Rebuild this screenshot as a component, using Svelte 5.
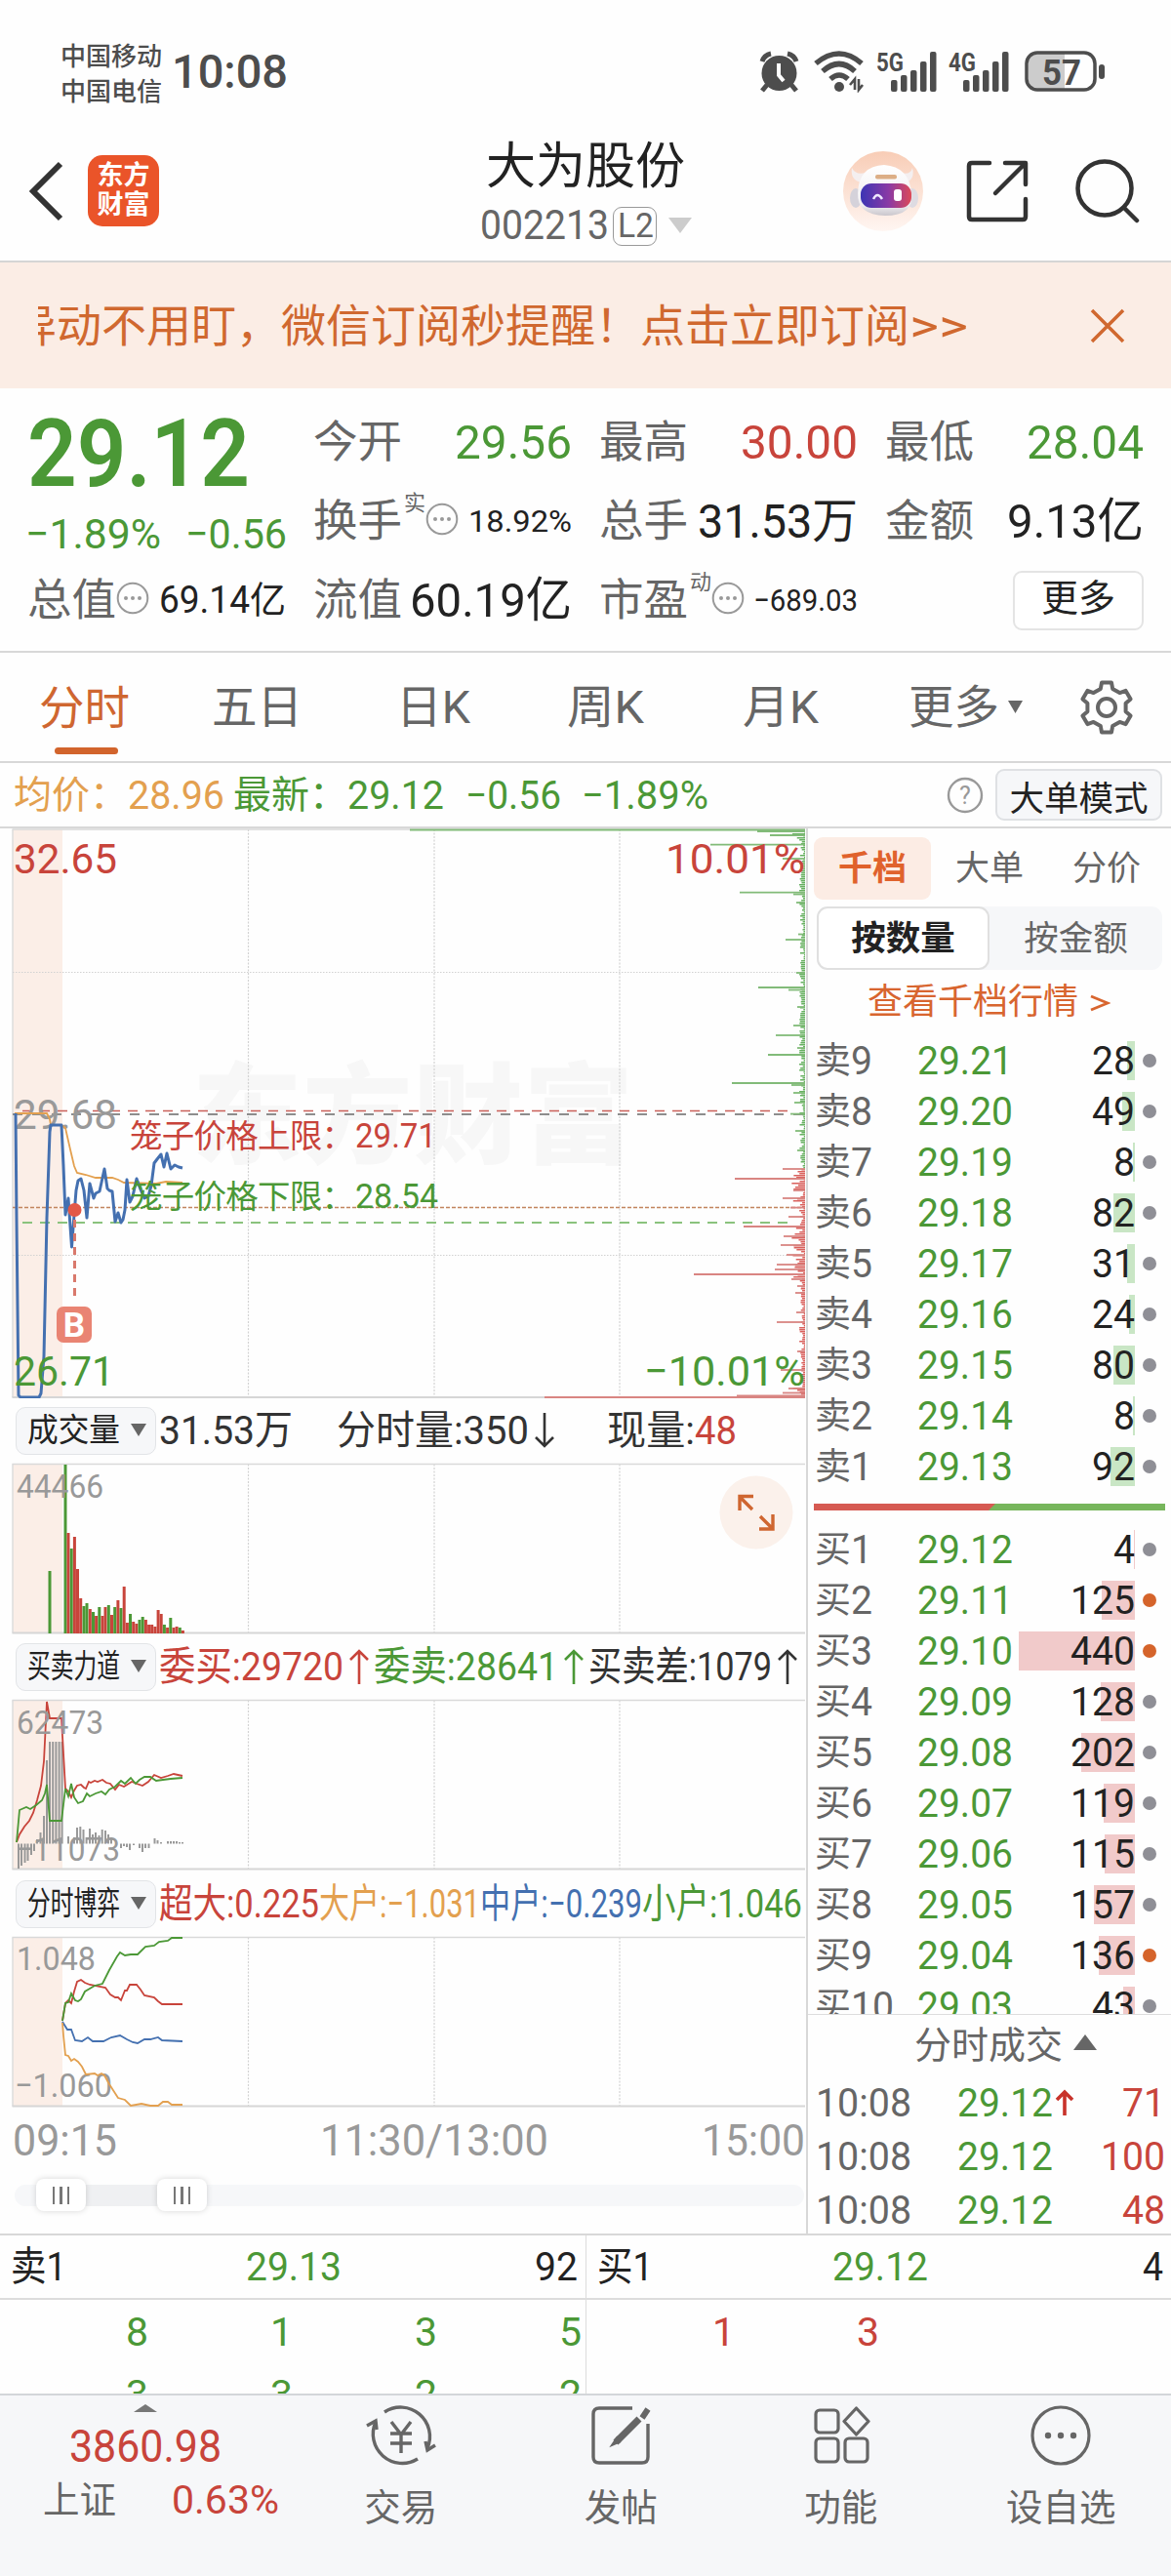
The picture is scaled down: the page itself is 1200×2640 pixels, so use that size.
<script>
  // Scales a run of text horizontally so that it occupies exactly `width` pixels.
  function fit(node, width) {
    if (!width) return;
    const natural = node.getBoundingClientRect().width;
    node.style.transform = `scaleX(${width / natural})`;
    node.style.marginRight = `${width - natural}px`;
  }

  const asks = [
    [9, '29.21', 28], [8, '29.20', 49], [7, '29.19', 8], [6, '29.18', 82], [5, '29.17', 31],
    [4, '29.16', 24], [3, '29.15', 80], [2, '29.14', 8], [1, '29.13', 92]
  ];
  const bids = [
    [1, '29.12', 4], [2, '29.11', 125, true], [3, '29.10', 440, true], [4, '29.09', 128], [5, '29.08', 202],
    [6, '29.07', 119], [7, '29.06', 115], [8, '29.05', 157], [9, '29.04', 136, true], [10, '29.03', 43]
  ];
  const trades = [['71', true], ['100', false], ['48', false]];

  const digitWidth = (s) => String(s).length * 22;

  // Depth spikes on the right edge of the price chart: [y, left x]
  const greenSpikes = [
    [850.5, 420], [852, 776], [856, 789], [865.6, 728], [880, 802], [914.6, 758], [916.5, 813], [925, 816],
    [957.5, 818], [963, 805], [997, 816], [1012, 777], [1014.5, 808], [1032, 817], [1051, 813], [1061, 795],
    [1074, 817], [1081, 787], [1110, 750], [1112, 811], [1120, 813], [1130, 814], [1141.6, 810], [1159, 815], [1179, 817]
  ];
  const redSpikes = [
    [1198, 802], [1208, 753], [1220, 813], [1228, 802], [1237.6, 810], [1247, 808], [1257, 762], [1267, 803],
    [1276, 800], [1286, 806], [1296, 796], [1301, 794], [1306, 711], [1311, 811], [1318, 817], [1325, 815],
    [1345, 816], [1355, 796], [1385, 817], [1404, 800], [1423, 808], [1427.5, 802], [1430.5, 755], [1432, 558]
  ];
  const noise = [];
  for (let y = 852, i = 0; y < 1432; y += 2, i++) {
    const r = (Math.sin(i * 12.9898) * 43758.5453) % 1;
    const dense = (y > 1196 && y < 1232) || (y > 1255 && y < 1310) || y > 1420 || y < 862;
    noise.push({ y, w: 1 + Math.abs(r) * (dense ? 13 : 5), red: y > 1196 });
  }

  const volume = [
    [51, 1610, 1], [67, 1501, 1], [70, 1571, 0], [73.2, 1587, 1], [76.4, 1575, 0], [79.5, 1608, 0], [82.7, 1638, 0],
    [86, 1646, 1], [89, 1643, 1], [92.3, 1649, 0], [95.5, 1652, 1], [98.6, 1656, 0], [101.8, 1647, 1], [105, 1656, 0],
    [108, 1647, 0], [111.3, 1645, 1], [114.5, 1655, 0], [117.7, 1647, 1], [120.9, 1640, 0], [124, 1648, 1],
    [127.2, 1626, 0], [130.4, 1663, 0], [133.5, 1654, 1], [136.7, 1662, 0], [139.9, 1664, 0], [143, 1660, 1],
    [146.2, 1657, 1], [149.4, 1660, 0], [152.6, 1665, 0], [155.7, 1665, 0], [158.9, 1667, 0], [162.1, 1650, 0],
    [165.2, 1654, 0], [168.4, 1665, 1], [171.6, 1668, 0], [174.8, 1658, 1], [178, 1668, 0], [181.1, 1667, 0],
    [184.3, 1668, 1], [187.4, 1671, 0]
  ];

  // Net force bars around a baseline: [x, y]
  const BASE = 1889.5;
  const force = [
    [19, 1915], [22, 1912], [25.5, 1909], [28.5, 1907], [32, 1901], [35, 1897], [38, 1885], [41.5, 1878], [45, 1861],
    [48, 1804], [51, 1785], [54.2, 1785], [57.4, 1785], [60.6, 1785], [63.6, 1785], [70, 1882], [76, 1883], [79, 1873],
    [82.3, 1872], [85.5, 1875], [88.6, 1883], [92, 1874], [95, 1880], [98, 1878], [101.5, 1881], [104.7, 1875],
    [108, 1876], [111, 1880], [114, 1883], [124, 1894], [127, 1892], [130, 1893], [133, 1896], [137, 1891], [143, 1894],
    [146, 1898], [149, 1894], [152.5, 1894], [158.5, 1884], [161.5, 1886], [165, 1888], [172, 1887], [175, 1887],
    [178, 1887], [181, 1887], [184, 1888], [187, 1888]
  ];

  const gear = (() => {
    const pts = [];
    for (let i = 0; i < 6; i++) {
      for (const [off, r] of [[-18, 20], [-11, 26], [11, 26], [18, 20]]) {
        const a = ((i * 60 - 90 + off) * Math.PI) / 180;
        pts.push(`${(30 + r * Math.cos(a)).toFixed(1)},${(30 + r * Math.sin(a)).toFixed(1)}`);
      }
    }
    return pts.join(' ');
  })();

  const sellQueue = ['8', '1', '3', '5', '3', '3', '2', '2'];
  const buyQueue = ['1', '3'];
</script>

{#snippet t(text, w, cls)}<span class="t {cls ?? ''}" use:fit={w}>{text}</span>{/snippet}

{#snippet dots()}
  <svg class="dots" width="34" height="34" viewBox="0 0 34 34">
    <circle cx="17" cy="17" r="15.3" fill="none" stroke="#999" stroke-width="2" />
    <circle cx="10" cy="17" r="2" fill="#999" /><circle cx="17" cy="17" r="2" fill="#999" /><circle cx="24" cy="17" r="2" fill="#999" />
  </svg>
{/snippet}

{#snippet signal(label)}
  <svg width="63" height="44" viewBox="0 0 63 44" fill="#4d4d4d">
    <text x="0" y="22" font-size="26" font-weight="700" textLength="28" lengthAdjust="spacingAndGlyphs">{label}</text>
    <rect x="15" y="31" width="6.5" height="12" rx="2" /><rect x="25" y="26" width="6.5" height="17" rx="2" />
    <rect x="35" y="21" width="6.5" height="22" rx="2" /><rect x="45" y="12" width="6.5" height="31" rx="2" />
    <rect x="55" y="2" width="6.5" height="41" rx="2" />
  </svg>
{/snippet}

{#snippet frame(top, bottom)}
  <rect x="13" y={top} width="51" height={bottom - top} fill="#fbeee7" />
  <g stroke="#d2d2d2" stroke-width="1.2" stroke-dasharray="2 1.5">
    <path d="M254.5 {top}V{bottom}M445 {top}V{bottom}M635 {top}V{bottom}" />
  </g>
  <path d="M13 {top}V{bottom}" stroke="#ddd" stroke-width="1.5" />
  <path d="M12.5 {top}H825" stroke="#d9d9d9" stroke-width="1.5" />
  <path d="M12.5 {bottom}H825" stroke="#d6d6d6" stroke-width="2" />
{/snippet}

{#snippet picker(label)}
  <div class="picker">
    {@render t(label, 95, 'picker-label')}
    <svg width="17" height="14" viewBox="0 0 17 14"><path d="M0 0H16L8 13Z" fill="#666" /></svg>
  </div>
{/snippet}

{#snippet level(side, n, price, qty, hot)}
  <div class="level">
    <span class="lv-name">{@render t(side, 37)}{@render t(n, digitWidth(n))}</span>
    {@render t(price, 98, 'green lv-price')}
    <span class="lv-qty">
      <i class={side === '卖' ? 'bar ask' : 'bar bid'} style="width: {Math.max(1.3, qty * 0.27)}px"></i>
      {@render t(qty, digitWidth(qty), 'lv-num')}
    </span>
    <i class="dot" class:hot></i>
  </div>
{/snippet}

<main>
  <header class="status">
    <div class="carriers"><span>中国移动</span><span>中国电信</span></div>
    {@render t('10:08', 119, 'clock')}
    <div class="status-icons">
      <svg width="42" height="44" viewBox="0 0 42 44">
        <circle cx="20.5" cy="24" r="18" fill="#4d4d4d" />
        <path d="M3 12A12 12 0 0 1 12 4M38 12A12 12 0 0 0 29 4" stroke="#4d4d4d" stroke-width="5" fill="none" />
        <path d="M8 36L3 42M33 36L38 42" stroke="#4d4d4d" stroke-width="5" />
        <path d="M20 14V26L25 32" stroke="#fff" stroke-width="4" fill="none" />
      </svg>
      <svg class="wifi" width="54" height="44" viewBox="0 0 54 44">
        <g fill="none" stroke="#4d4d4d" stroke-width="5.5">
          <path d="M2 14Q26 -6 49 14" /><path d="M9 22Q26 7 42 22" /><path d="M17 30Q26 22 35 30" />
        </g>
        <circle cx="26" cy="38" r="5" fill="#4d4d4d" />
        <path d="M37 36L42 30V41M50 36L46 41V30" fill="none" stroke="#4d4d4d" stroke-width="2.6" />
      </svg>
      <span class="sig-a">{@render signal('5G')}</span>
      <span class="sig-b">{@render signal('4G')}</span>
      <svg class="battery" width="84" height="44" viewBox="0 0 84 44">
        <path d="M12 4H41V41H12Q4 41 4 33V12Q4 4 12 4Z" fill="#ccc" />
        <rect x="2" y="3" width="70" height="38" rx="11" fill="none" stroke="#4d4d4d" stroke-width="3.5" />
        <rect x="76" y="15" width="6" height="15" rx="3" fill="#4d4d4d" />
        <text x="18" y="35.5" font-size="37" font-weight="700" textLength="40" lengthAdjust="spacingAndGlyphs" fill="#4d4d4d">57</text>
      </svg>
    </div>
  </header>

  <nav class="titlebar">
    <div class="tb-left">
      <svg width="36" height="62" viewBox="0 0 36 62"><path d="M32 3L4 31L32 59" fill="none" stroke="#333" stroke-width="6" /></svg>
      <div class="logo"><span>东方</span><span>财富</span></div>
    </div>
    <div class="tb-title">
      <h1>大为股份</h1>
      <div class="code">
        {@render t('002213', 132)}
        <span class="l2">{@render t('L2', 37)}</span>
        <svg width="24" height="16" viewBox="0 0 24 16"><path d="M0 0H24L12 16Z" fill="#ccc" /></svg>
      </div>
    </div>
    <div class="tb-right">
      <svg width="82" height="82" viewBox="0 0 82 82">
        <defs>
          <linearGradient id="halo" x1="0" y1="0" x2="0" y2="1"><stop offset="0" stop-color="#f8cdb6" /><stop offset="1" stop-color="#fff6f2" /></linearGradient>
          <linearGradient id="visor"><stop offset="0" stop-color="#3c35b4" /><stop offset=".55" stop-color="#8a3aa5" /><stop offset="1" stop-color="#dc4a58" /></linearGradient>
          <linearGradient id="shell" x1="0" y1="0" x2="0" y2="1"><stop offset="0" stop-color="#fff" /><stop offset=".8" stop-color="#efedf0" /><stop offset="1" stop-color="#c9c6cc" /></linearGradient>
        </defs>
        <circle cx="41" cy="41" r="41" fill="url(#halo)" />
        <path d="M9 17Q7 29 18 32L23 22Q13 25 9 17ZM71 17Q74 29 64 32L59 22Q69 25 71 17Z" fill="#f4eff0" />
        <ellipse cx="13" cy="48" rx="6" ry="10" fill="#d5d2da" /><ellipse cx="71" cy="48" rx="6" ry="10" fill="#dedbe2" />
        <path d="M15 43Q16 15 42 14Q68 16 70 43Q73 66 43 66Q14 65 15 43Z" fill="url(#shell)" />
        <rect x="33" y="24" width="22" height="4.5" rx="2" fill="#dcae86" />
        <rect x="18" y="33" width="52" height="25" rx="11" fill="url(#visor)" />
        <path d="M31 49Q35 41 40 49" fill="none" stroke="#f0e8ff" stroke-width="2.5" />
        <rect x="52" y="39" width="8" height="12" rx="3" fill="#fff" />
      </svg>
      <svg width="64" height="64" viewBox="0 0 64 64" fill="none" stroke="#333" stroke-width="4.5" stroke-linecap="round" stroke-linejoin="round">
        <path d="M24 3H6Q3 3 3 6V58Q3 61 6 61H58Q61 61 61 58V40" /><path d="M40 3H61V25M60 4L30 34" />
      </svg>
      <svg width="66" height="66" viewBox="0 0 66 66" fill="none" stroke="#333" stroke-width="4.5" stroke-linecap="round">
        <circle cx="30" cy="30" r="27.5" /><path d="M51 51L63 63" />
      </svg>
    </div>
  </nav>

  <section class="banner">
    <div class="marquee"><span>异动不用盯，微信订阅秒提醒！点击立即订阅</span>{@render t('>>', 60)}</div>
    <svg width="36" height="36" viewBox="0 0 36 36"><path d="M2 2L34 34M34 2L2 34" stroke="#d0682f" stroke-width="3.5" /></svg>
  </section>

  <section class="quote">
    <div class="headline">
      <div class="price">{@render t('29.12', 228)}</div>
      <div class="change">{@render t('−1.89%', 139)}{@render t('−0.56', 104)}</div>
    </div>
    <div class="cell"><span class="k">今开</span>{@render t('29.56', 120, 'v green')}</div>
    <div class="cell"><span class="k">最高</span>{@render t('30.00', 120, 'v red')}</div>
    <div class="cell"><span class="k">最低</span>{@render t('28.04', 120, 'v green')}</div>
    <div class="cell"><span class="k">换手</span><sup>实</sup>{@render dots()}{@render t('18.92%', 106, 'v s')}</div>
    <div class="cell"><span class="k">总手</span>{@render t('31.53万', 164, 'v')}</div>
    <div class="cell"><span class="k">金额</span>{@render t('9.13亿', 140, 'v')}</div>
    <div class="cell"><span class="k">总值</span>{@render dots()}{@render t('69.14亿', 130, 'v m')}</div>
    <div class="cell"><span class="k">流值</span>{@render t('60.19亿', 166, 'v')}</div>
    <div class="cell"><span class="k">市盈</span><sup>动</sup>{@render dots()}{@render t('−689.03', 107, 'v s')}</div>
    <div class="cell"><button class="more">更多</button></div>
  </section>

  <nav class="tabs">
    <div class="tab active">分时</div>
    <div class="tab t5">五日</div>
    <div class="tab tk">{@render t('日K', 76)}</div>
    <div class="tab tz">{@render t('周K', 79)}</div>
    <div class="tab ty">{@render t('月K', 78)}</div>
    <div class="tab tm">更多<svg width="16" height="14" viewBox="0 0 16 14"><path d="M0 0H15L7.5 13Z" fill="#666" /></svg></div>
    <svg class="gear" width="60" height="60" viewBox="0 0 60 60" fill="none" stroke="#666" stroke-width="4" stroke-linejoin="round">
      <polygon points={gear} /><circle cx="30" cy="30" r="9" />
    </svg>
  </nav>

  <section class="info">
    {@render t('均价：', 117, 'gold c')}{@render t('28.96', 99, 'gold')}
    {@render t('最新：', 117, 'green c i1')}{@render t('29.12', 99, 'green')}{@render t('−0.56', 98, 'green i2')}{@render t('−1.89%', 130, 'green i3')}
    <svg class="help" width="38" height="38" viewBox="0 0 38 38">
      <circle cx="19" cy="19" r="17" fill="none" stroke="#999" stroke-width="2.4" />
      <text x="19" y="28" font-size="25" text-anchor="middle" fill="#999">?</text>
    </svg>
    <button class="mode">大单模式</button>
  </section>

  <div class="board">
    <section class="left">
      <svg width="826" height="584" viewBox="0 849 826 584">
        <text x="197" y="1184" font-size="112" font-weight="900" textLength="452" fill="#f7f7f7">东方财富</text>
        {@render frame(850, 1432)}
        <path d="M13 996.5H825M13 1286.5H825" stroke="#d2d2d2" stroke-width="1.2" stroke-dasharray="1.5 1.5" />
        <path d="M23 1138.5H808" stroke="#c9605a" stroke-width="1.4" stroke-dasharray="10 8" />
        <path d="M13 1142H825" stroke="#8d8d8d" stroke-width="2" stroke-dasharray="10 10" />
        <path d="M13 1237.5H825" stroke="#c2855e" stroke-width="1.6" stroke-dasharray="4 2" />
        <path d="M23 1253H808" stroke="#8ac27d" stroke-width="2" stroke-dasharray="10 8" />
        {#each noise as n}
          <rect x={825 - n.w} y={n.y} width={n.w} height="1.5" fill={n.red ? '#d9605c' : '#66b060'} />
        {/each}
        {#each greenSpikes as [y, x]}
          <path d="M{x} {y}H825" stroke="#82bb79" stroke-width="1.8" />
        {/each}
        {#each redSpikes as [y, x]}
          <path d="M{x} {y}H825" stroke="#d98582" stroke-width="1.8" />
        {/each}
        <g font-size="43">
          <text x="14" y="895" textLength="106" lengthAdjust="spacingAndGlyphs" fill="#c8443b">32.65</text>
          <text x="682" y="895" textLength="143" lengthAdjust="spacingAndGlyphs" fill="#c8443b">10.01%</text>
          <text x="14" y="1157" textLength="106" lengthAdjust="spacingAndGlyphs" fill="#999">29.68</text>
        </g>
        <polyline fill="none" stroke="#e3a04f" stroke-width="1.8" points="15,1141 48,1141 51,1147 52,1153 63,1153 67,1156 72,1178 76,1195 79,1202 88,1204 98,1207 115,1207 121,1209 127,1212 160,1213 170,1211 187,1212" />
        <polyline fill="none" stroke="#4470b0" stroke-width="3" stroke-linejoin="round" points="16,1141 17,1250 19,1430 21,1432 40,1432 42,1428 45,1390 48,1248 51,1160 52,1153 63,1153 65,1195 67,1245 70,1228 73.5,1278 76,1245 78,1220 80,1210 83,1208 86,1220 89,1248 92,1213 96,1228 98,1223 102,1221 107,1198 110,1218 112,1220 115,1221 118,1252 121,1243 124,1253 126,1250 128,1240 130,1209 133,1232 136,1226 140,1208 144,1219 148,1228 152,1226 155,1215 158,1192 161,1188 165,1183 168,1196 171,1182 175,1198 179,1194 183,1196 187,1197" />
        <path d="M76.5 1250V1332" stroke="#d9796c" stroke-width="3" stroke-dasharray="8 6" />
        <circle cx="76.5" cy="1240" r="7" fill="#e35847" />
        <rect x="58" y="1339" width="36" height="37" rx="7" fill="#e98473" />
        <text x="76" y="1370" font-size="35" font-weight="700" text-anchor="middle" fill="#fff">B</text>
        <g font-size="43" fill="#4b9836">
          <text x="14" y="1420" textLength="103" lengthAdjust="spacingAndGlyphs">26.71</text>
          <text x="660" y="1420" textLength="165" lengthAdjust="spacingAndGlyphs">−10.01%</text>
        </g>
        <g font-size="33.5">
          <text x="133" y="1176" textLength="230" fill="#c8443b">笼子价格上限：</text>
          <text x="364" y="1176" font-size="35" textLength="83" lengthAdjust="spacingAndGlyphs" fill="#c8443b">29.71</text>
          <text x="133" y="1238" textLength="230" fill="#4b9836">笼子价格下限：</text>
          <text x="364" y="1238" font-size="35" textLength="85" lengthAdjust="spacingAndGlyphs" fill="#4b9836">28.54</text>
        </g>
      </svg>

      <div class="ind">
        {@render picker('成交量')}
        {@render t('31.53万', 137)}
        {@render t('分时量:350', 197, 'g1')}<svg class="arr" width="24" height="38" viewBox="0 0 24 38"><path d="M12 1V34M3 26L12 35L21 26" fill="none" stroke="#333" stroke-width="2.6" /></svg>
        {@render t('现量:', 90, 'g2')}{@render t('48', 43, 'red')}
      </div>

      <svg width="826" height="176" viewBox="0 1499 826 176">
        {@render frame(1500.5, 1673.5)}
        {#each volume as [x, y, up]}
          <rect x={x - 1.5} {y} width="3" height={1674 - y} fill={up ? '#4b9836' : '#c8443b'} />
        {/each}
        <text x="17" y="1535" font-size="34" textLength="89" lengthAdjust="spacingAndGlyphs" fill="#999">44466</text>
        <circle cx="775" cy="1550" r="37.5" fill="#fbf1eb" />
        <path d="M772 1533.5H758V1548M758 1534L771 1547M778 1567H792V1552M792 1567L779 1554" fill="none" stroke="#cf6630" stroke-width="3.4" />
      </svg>

      <div class="ind">
        {@render picker('买卖力道')}
        {@render t('委买:29720', 189, 'red')}<svg class="arr" width="24" height="38" viewBox="0 0 24 38"><path d="M12 37V4M3 12L12 3L21 12" fill="none" stroke="#c8443b" stroke-width="2.6" /></svg>
        {@render t('委卖:28641', 189, 'green g3')}<svg class="arr" width="24" height="38" viewBox="0 0 24 38"><path d="M12 37V4M3 12L12 3L21 12" fill="none" stroke="#4b9836" stroke-width="2.6" /></svg>
        {@render t('买卖差:1079', 188, 'g3')}<svg class="arr" width="24" height="38" viewBox="0 0 24 38"><path d="M12 37V4M3 12L12 3L21 12" fill="none" stroke="#333" stroke-width="2.6" /></svg>
      </div>

      <svg width="826" height="177" viewBox="0 1741 826 177">
        {@render frame(1742.5, 1915.5)}
        {#each force as [x, y]}
          <rect x={x - 1} y={Math.min(y, BASE)} width="2" height={Math.abs(BASE - y)} fill="#999" />
        {/each}
        <polyline fill="none" stroke="#c8443b" stroke-width="1.8" points="17,1888 20,1880 25,1872 30,1866 34,1858 38,1845 42,1830 45,1805 48,1744 51,1761 63,1761 67,1833 70,1836 73,1842 76,1835 79,1830 83,1829 86,1832 88,1833 91,1826 93,1827 97,1825 100,1826 105,1824 109,1827 113,1828 118,1834 122,1829 127,1831 135,1826 140,1828 146,1830 152,1826 158,1819 165,1822 172,1820 178,1818 187,1820" />
        <polyline fill="none" stroke="#4b9836" stroke-width="1.8" points="17,1888 20,1855 27,1852 31,1854 37,1850 43,1845 46,1838 48,1829 51,1866 63,1866 67,1833 70,1841 73,1828 76,1842 80,1848 85,1846 89,1838 92,1841 98,1838 104,1836 108,1839 112,1834 118,1831 124,1825 128,1828 134,1822 139,1828 143,1824 148,1821 154,1821 160,1825 167,1824 175,1823 187,1822" />
        <text x="17" y="1777" font-size="34" textLength="89" lengthAdjust="spacingAndGlyphs" fill="#999">62473</text>
        <text x="16" y="1907" font-size="34" textLength="107" lengthAdjust="spacingAndGlyphs" fill="#999">−11073</text>
      </svg>

      <div class="ind">
        {@render picker('分时博弈')}
        {@render t('超大:0.225', 164, 'red')}{@render t('大户:−1.031', 165, 'gold')}{@render t('中户:−0.239', 166, 'blue')}{@render t('小户:1.046', 164, 'green')}
      </div>

      <svg width="826" height="177" viewBox="0 1983 826 177">
        {@render frame(1984.5, 2157.5)}
        <text x="17" y="2018" font-size="34" textLength="81" lengthAdjust="spacingAndGlyphs" fill="#999">1.048</text>
        <text x="15" y="2148" font-size="34" textLength="100" lengthAdjust="spacingAndGlyphs" fill="#999">−1.060</text>
        <g fill="none" stroke-width="1.8">
          <polyline stroke="#c8443b" points="64,2070 67,2052 70,2049 73,2052 76,2040 79,2030 83,2028 87,2031 92,2033 108,2036 113,2043 118,2046 121,2046 124,2049 128,2039 130,2039 133,2033 140,2033 144,2038 148,2044 158,2046 162,2050 166,2053 187,2053" />
          <polyline stroke="#4b9836" points="64,2070 66,2058 67,2052 70,2051 73,2042 77,2049 80,2050 83,2048 87,2040 92,2037 97,2034 105,2032 112,2018 120,2004 123,2000 128,2003 134,2002 141,2002 149,1994 158,1993 163,1989 172,1988 176,1985 187,1985" />
          <polyline stroke="#4470b0" points="64,2071 69,2079 73,2079 77,2090 84,2091 90,2087 95,2091 106,2091 114,2087 123,2085 130,2089 136,2092 141,2093 148,2089 154,2089 162,2087 166,2090 187,2091" />
          <polyline stroke="#e3a04f" points="64,2072 65,2085 67,2105 70,2106 73,2111 76,2109 80,2112 84,2117 88,2125 97,2124 100,2126 104,2124 107,2126 112,2135 121,2149 128,2151 134,2157 145,2155 154,2157 162,2157 167,2153 172,2153 176,2156 187,2156" />
        </g>
      </svg>

      <div class="axis">
        <div class="ax">{@render t('09:15', 107)}</div>
        <div class="ax mid">{@render t('11:30/13:00', 234)}</div>
        <div class="ax end">{@render t('15:00', 106)}</div>
      </div>
      <div class="slider">
        <div class="track"><div class="range"></div></div>
        <div class="handle h1"><i></i><i></i><i></i></div>
        <div class="handle h2"><i></i><i></i><i></i></div>
      </div>
    </section>

    <aside class="right">
      <div class="book-tabs"><span class="on">千档</span><span>大单</span><span>分价</span></div>
      <div class="seg"><span class="on">按数量</span><span>按金额</span></div>
      <div class="link">查看千档行情<svg width="22" height="18" viewBox="0 0 22 18"><path d="M2 2L19 9L2 16" fill="none" stroke="#d8652f" stroke-width="2.8" /></svg></div>
      <div class="levels">
        {#each asks as [n, p, q]}{@render level('卖', n, p, q, false)}{/each}
      </div>
      <svg class="ratio" width="360" height="7" viewBox="0 0 360 7">
        <rect width="360" height="7" fill="#77b65c" /><path d="M0 0H186L179 7H0Z" fill="#d65a52" />
      </svg>
      <div class="levels bids">
        {#each bids as [n, p, q, hot]}{@render level('买', n, p, q, !!hot)}{/each}
      </div>
      <div class="ticks-title">分时成交<svg width="24" height="16" viewBox="0 0 24 16"><path d="M0 16H24L12 0Z" fill="#666" /></svg></div>
      {#each trades as [q, up]}
        <div class="tick">
          {@render t('10:08', 98)}
          {@render t('29.12', 98, 'green tp')}
          <svg width="20" height="28" viewBox="0 0 20 28">{#if up}<path d="M10 27V4M2 11L10 3L18 11" fill="none" stroke="#c8332b" stroke-width="3.6" />{/if}</svg>
          {@render t(q, digitWidth(q), 'red tq')}
        </div>
      {/each}
    </aside>
  </div>

  <section class="queue">
    <div class="q-col">
      <div class="q-head">{@render t('卖1', 57)}{@render t('29.13', 98, 'green qp')}{@render t('92', 44)}</div>
      <div class="q-body green">{#each sellQueue as n}<span>{n}</span>{/each}</div>
    </div>
    <div class="q-col">
      <div class="q-head">{@render t('买1', 57)}{@render t('29.12', 98, 'green qp')}{@render t('4', 21)}</div>
      <div class="q-body red">{#each buyQueue as n}<span>{n}</span>{/each}</div>
    </div>
  </section>

  <footer>
    <div class="index">
      <svg width="24" height="8" viewBox="0 0 24 8"><path d="M0 8H24L12 0Z" fill="#777" /></svg>
      <div class="ix-val red">{@render t('3860.98', 156)}</div>
      <div class="ix-row"><span>上证</span>{@render t('0.63%', 110, 'red ix-pct')}</div>
    </div>
    <div class="item">
      <svg width="72" height="66" viewBox="0 0 72 66" fill="none" stroke="#666" stroke-width="3.4">
        <path d="M19 9A30 30 0 0 1 63 46M53 57A30 30 0 0 1 10 19" />
        <path d="M1 23L10 18L11 27M71 43L63 48L61 39" />
        <path d="M26 19L36 32L46 19M36 32V51M25 31H47M25 41H47" />
      </svg>
      <span>交易</span>
    </div>
    <div class="item">
      <svg width="62" height="66" viewBox="0 0 62 66" fill="none" stroke="#666" stroke-width="3.4">
        <path d="M43 5H9Q3 5 3 11V55Q3 61 9 61H53Q59 61 59 55V21" />
        <path d="M53 15L59 6" stroke-width="6" /><path d="M50 16L26 40" stroke-width="7" /><path d="M28 34L22 43L31 39" stroke-width="2" fill="#666" />
      </svg>
      <span>发帖</span>
    </div>
    <div class="item">
      <svg width="60" height="66" viewBox="0 0 60 66" fill="none" stroke="#666" stroke-width="3.2" stroke-linejoin="round">
        <rect x="4" y="7" width="23" height="23" rx="4" /><rect x="4" y="36" width="23" height="24" rx="4" /><rect x="34" y="36" width="23" height="24" rx="4" />
        <path d="M45.500 5L58 18.500L45.500 32L33 18.500Z" />
      </svg>
      <span>功能</span>
    </div>
    <div class="item">
      <svg width="64" height="66" viewBox="0 0 64 66">
        <circle cx="32" cy="33" r="29" fill="none" stroke="#666" stroke-width="3.2" />
        <circle cx="19" cy="33" r="3.2" fill="#666" /><circle cx="32" cy="33" r="3.2" fill="#666" /><circle cx="45" cy="33" r="3.2" fill="#666" />
      </svg>
      <span>设自选</span>
    </div>
  </footer>
</main>

<style>
  :global(body) { margin: 0; background: #fff; }
  main {
    width: 1200px; height: 2640px; overflow: hidden; display: flex; flex-direction: column;
    background: #fefefe; color: #222; font-family: Roboto, "Noto Sans CJK SC", sans-serif; font-size: 41px; line-height: 1;
  }
  main * { box-sizing: border-box; }
  svg { display: block; flex: none; }
  h1 { margin: 0; font-weight: 400; }
  button { font-family: inherit; padding: 0; color: #222; white-space: nowrap; }
  .t { display: inline-block; flex: none; white-space: nowrap; transform-origin: left center; line-height: inherit; }
  .green { color: #4b9836; }
  .red { color: #c8443b; }
  :global(.gold) { color: #e3a04f; }
  :global(.blue) { color: #4470b0; }

  .status { height: 128px; flex: none; display: flex; align-items: center; padding: 19px 66px 0 62px; color: #4d4d4d; }
  .carriers { display: flex; flex-direction: column; gap: 10px; font-size: 26px; font-weight: 500; width: 114px; padding-top: 4px; }
  .status :global(.clock) { font-size: 49px; font-weight: 500; }
  .status-icons { margin-left: auto; display: flex; align-items: center; margin-top: -2px; }
  .wifi { margin-left: 14px; }
  .sig-a { margin-left: 10px; }
  .sig-b { margin-left: 11px; }
  .battery { margin-left: 15px; }

  .titlebar { height: 141px; flex: none; display: flex; border-bottom: 2px solid #d5d5d5; }
  .tb-left, .tb-right { width: 360px; display: flex; align-items: center; padding-bottom: 4px; }
  .tb-left { padding-left: 30px; }
  .logo {
    margin-left: 24px; width: 73px; height: 73px; border-radius: 15px; background: #ea5429; color: #fff;
    display: flex; flex-direction: column; align-items: center; justify-content: center; gap: 3px; font-size: 27px; font-weight: 700;
  }
  .tb-title { width: 480px; display: flex; flex-direction: column; align-items: center; }
  .tb-title h1 { font-size: 51px; line-height: 60px; margin-top: 13px; }
  .code { height: 42px; margin-top: 9px; display: flex; align-items: center; font-size: 42px; color: #666; }
  .l2 { height: 40px; width: 45px; margin: 2px 12px 0 4px; padding-left: 4px; border: 1.5px solid #999; border-radius: 9px; font-size: 35px; line-height: 38px; }
  .tb-right { padding-left: 24px; }
  .tb-right svg + svg { margin-left: 44px; }
  .tb-right svg:last-child { margin-left: 48px; }

  .banner { height: 129px; flex: none; background: #fbede5; display: flex; align-items: center; padding: 0 47px 0 39px; color: #d0682f; justify-content: space-between; }
  .marquee { width: 960px; height: 60px; line-height: 60px; overflow: hidden; display: flex; font-size: 46px; white-space: nowrap; }
  .marquee span:first-child { margin-left: -27px; }

  .quote { height: 271px; flex: none; padding: 15px 0 0 28px; display: grid; grid-template-columns: repeat(4, 265px); grid-template-rows: repeat(3, 81px); column-gap: 28px; border-bottom: 2px solid #d8d8d8; }
  .headline { grid-row: span 2; color: #4b9836; }
  .price { font-size: 96px; font-weight: 600; line-height: 104px; }
  .change { display: flex; justify-content: space-between; font-size: 43px; line-height: 60px; margin: 0 -1px 0 -2px; }
  .cell { display: flex; align-items: center; line-height: 83px; }
  .k { font-size: 45.5px; color: #666; }
  .cell :global(.v) { font-size: 49px; }
  .cell :global(.v.s) { font-size: 32px; }
  .cell :global(.v.m) { font-size: 38px; }
  .cell > :global(.t) { order: 2; }
  .cell::after { content: ""; order: 1; flex: 1; }
  sup { font-size: 22px; line-height: 22px; align-self: flex-start; margin: 11px 0 0 2px; color: #666; }
  .dots { margin-top: -6px; }
  .more { margin-left: auto; order: 3; width: 134px; height: 61px; border: 2px solid #e4e4e4; border-radius: 9px; background: #fff; font-size: 38px; line-height: 50px; padding-bottom: 5px; }

  .tabs { height: 113px; flex: none; display: flex; align-items: center; border-bottom: 2px solid #d8d8d8; font-size: 46.5px; color: #666; padding: 0 36px 0 40px; }
  .tab { height: 113px; line-height: 116px; flex: none; display: flex; align-items: center; }
  .active { color: #cf6630; flex-direction: column; width: 93px; position: relative; }
  .active::after { content: ""; position: absolute; left: 16px; bottom: 8px; width: 65px; height: 7px; border-radius: 4px; background: #d2642c; }
  .t5 { width: 93px; margin-left: 84px; }
  .tk { margin-left: 96px; }
  .tz { margin-left: 99px; }
  .ty { margin-left: 101px; }
  .tm { margin-left: 92px; }
  .tm svg { margin-left: 9px; }
  .gear { margin-left: auto; }

  .info { height: 67px; flex: none; display: flex; align-items: center; border-bottom: 2px solid #d8d8d8; padding: 0 9px 0 14px; line-height: 64px; }
  .info :global(.c) { font-size: 39px; }
  .info :global(.i1) { margin-left: 9px; }
  .info :global(.i2) { margin-left: 22px; }
  .info :global(.i3) { margin-left: 21px; }
  .help { margin-left: auto; }
  .mode { margin-left: 12px; width: 171px; height: 53px; border: 2px solid #dfe1e4; border-radius: 9px; background: #f6f7f9; font-size: 35.5px; }

  .board { height: 1442px; flex: none; display: flex; border-bottom: 2px solid #d8d8d8; }
  .left { width: 828px; border-right: 2px solid #d8d8d8; flex: none; }
  .ind { height: 66px; display: flex; align-items: center; padding-left: 16px; color: #333; line-height: 66px; }
  .picker { width: 144px; height: 49px; margin-right: 3px; border: 1.5px solid #e2e4e7; border-radius: 10px; background: #f6f7f9; display: flex; align-items: center; padding-left: 11px; line-height: 46px; color: #222; }
  .picker :global(.picker-label) { font-size: 33px; }
  .picker svg { margin-left: 11px; }
  .arr { margin-left: 4px; }
  .ind :global(.g1) { margin-left: 45px; }
  .ind :global(.g2) { margin-left: 52px; }
  .ind :global(.g3) { margin-left: 3px; }
  .axis { height: 64px; display: flex; padding: 0 0 0 13px; color: #999; font-size: 44px; line-height: 67px; }
  .ax { display: flex; width: 107px; }
  .ax.mid { width: 234px; margin-left: 208px; }
  .ax.end { margin-left: auto; }
  .slider { height: 48px; padding: 14px 2px 0 15px; position: relative; }
  .track { height: 22px; border-radius: 11px; background: #f6f7f9; padding-left: 50px; }
  .range { width: 120px; height: 22px; background: #eff0f2; }
  .handle { position: absolute; top: 8px; width: 51px; height: 33px; border-radius: 8px; background: #fff; box-shadow: 0 0 6px rgba(0, 0, 0, 0.16); display: flex; align-items: center; justify-content: center; gap: 5.5px; }
  .handle i { width: 2.2px; height: 18px; background: #777; }
  .h1 { left: 37px; }
  .h2 { left: 161px; }

  .right { flex: 1; padding: 9px 7px 0 6px; color: #666; display: flex; flex-direction: column; }
  .book-tabs { display: flex; height: 64px; flex: none; }
  .book-tabs span { width: 120px; height: 64px; line-height: 66px; text-align: center; font-size: 35px; border-radius: 9px; white-space: nowrap; }
  .book-tabs .on { background: #fcece4; color: #e0622c; font-weight: 700; }
  .seg { margin: 7px 3px 0; height: 65px; flex: none; background: #f6f7f9; border-radius: 11px; display: flex; }
  .seg span { width: 177px; text-align: center; line-height: 66px; font-size: 35.5px; }
  .seg .on { background: #fff; border: 2px solid #e0e0e0; border-radius: 11px; color: #222; font-weight: 700; line-height: 63px; }
  .link { height: 67px; flex: none; line-height: 69px; display: flex; align-items: center; padding-left: 55px; font-size: 36px; color: #d8652f; white-space: nowrap; }
  .link svg { margin-left: 11px; }
  .levels { height: 468px; flex: none; }
  .level { height: 52px; line-height: 53px; display: flex; align-items: center; padding-left: 1px; }
  .lv-name { width: 105px; flex: none; display: flex; font-size: 41px; }
  .lv-name > :global(.t:first-child) { font-size: 37px; }
  .lv-qty { width: 125px; height: 40px; display: flex; justify-content: flex-end; align-items: center; position: relative; color: #222; }
  .lv-qty > :global(.t) { position: relative; }
  .bar { position: absolute; right: 0; top: 0; height: 100%; }
  .ask { background: #c9e6c5; }
  .bid { background: #f1caca; }
  .dot { margin-left: 8px; width: 14px; height: 14px; flex: none; border-radius: 50%; background: #8f8f96; }
  .dot.hot { background: #d5642b; }
  .ratio { margin-top: 12px; }
  .bids { height: 503px; margin: 14px -7px 0 -6px; padding-left: 6px; overflow: hidden; border-bottom: 1.5px solid #ddd; }
  .ticks-title { height: 62px; flex: none; line-height: 62px; font-size: 38px; display: flex; align-items: center; padding-left: 103px; }
  .ticks-title svg { margin-left: 11px; margin-top: -6px; }
  .tick { height: 55px; flex: none; line-height: 56px; display: flex; align-items: center; padding-left: 2px; }
  .tick :global(.tp) { margin-left: 47px; }
  .tick svg { margin-left: 2px; margin-right: auto; }

  .queue { height: 162px; flex: none; display: flex; overflow: hidden; }
  .q-col { width: 600px; }
  .q-col + .q-col { border-left: 1.5px solid #ddd; }
  .q-head { height: 66px; border-bottom: 2px solid #dcdcdc; display: flex; align-items: center; line-height: 66px; padding: 0 8px 0 11px; }
  .q-head :global(.qp) { margin-left: 184px; }
  .q-head > :global(.t:last-child) { order: 2; }
  .q-head::after { content: ""; order: 1; flex: 1; }
  .q-body { display: grid; grid-template-columns: repeat(4, 148px); grid-auto-rows: 64px; line-height: 66px; padding-left: 4px; }
  .q-body span { text-align: right; }

  footer { flex: 1; background: #f6f7f9; border-top: 2px solid #d3d6d9; display: flex; color: #666; font-size: 37.5px; }
  .index { width: 298px; display: flex; flex-direction: column; align-items: center; padding-top: 9px; }
  .ix-val { font-size: 46px; line-height: 52px; margin-top: 9px; }
  .ix-row { align-self: flex-start; display: flex; align-items: center; padding-left: 44px; margin-top: 4px; line-height: 50px; }
  .ix-row :global(.ix-pct) { font-size: 41px; margin-left: 57px; }
  .item { width: 225.5px; display: flex; flex-direction: column; align-items: center; padding-top: 8px; }
  .item span { margin-top: 13px; line-height: 56px; white-space: nowrap; }
</style>
